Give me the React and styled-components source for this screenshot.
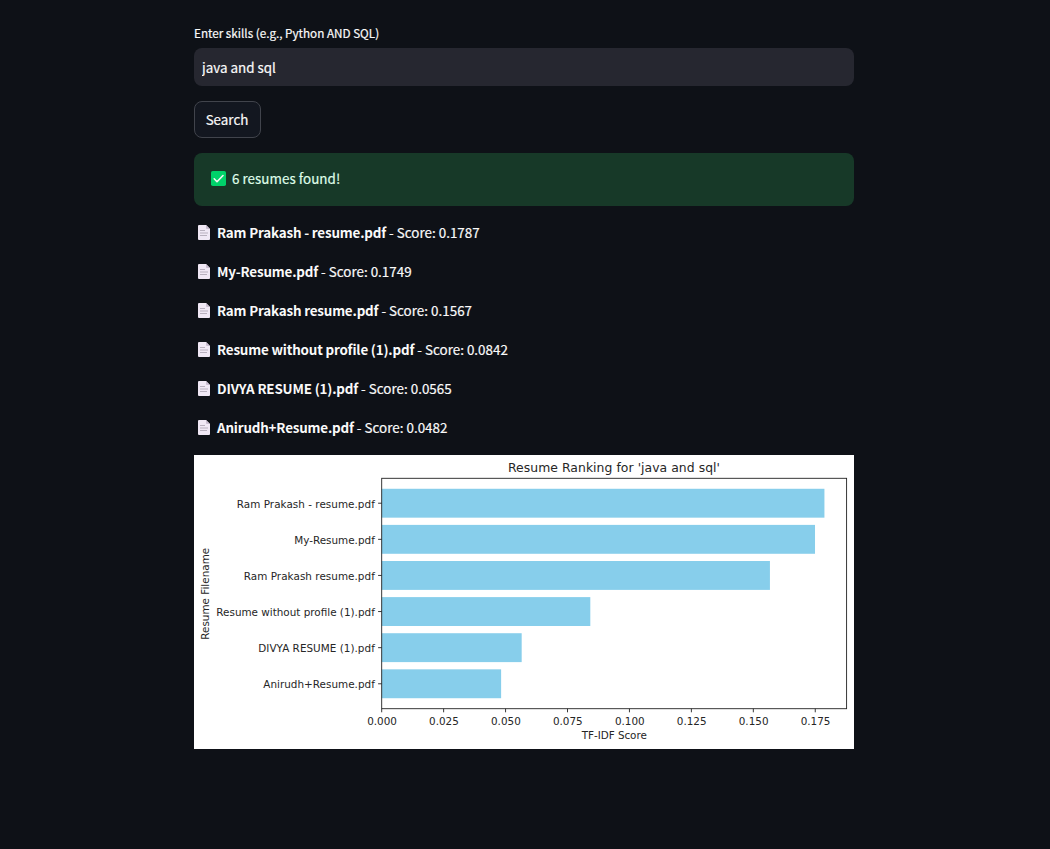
import React from 'react';
import styled, { createGlobalStyle } from 'styled-components';

const GlobalStyle = createGlobalStyle`
  * { box-sizing: border-box; }
  body {
    margin: 0;
    background: #0e1117;
    color: #fafafa;
    font-family: "Source Sans Pro", "Noto Sans CJK SC", sans-serif;
    font-size: 13.4px;
    -webkit-text-stroke: 0.2px currentColor;
  }
`;

const Page = styled.main`
  width: 660px;
  min-height: 849px;
  margin-left: 194px;
  padding-top: 22px;
  display: flex;
  flex-direction: column;
  align-items: flex-start;
`;

const Label = styled.label`
  font-size: 11.7px;
  line-height: 21px;
  height: 21px;
  margin-bottom: 5px;
`;

const Field = styled.input`
  width: 100%;
  height: 38px;
  padding: 0 8px 1px;
  border: 0;
  border-radius: 8px;
  outline: 0;
  background: #262730;
  color: #fafafa;
  font: inherit;
`;

const Button = styled.button`
  width: 67px;
  height: 37px;
  margin: 15px 0;
  padding: 0 1px 1px 0;
  border: 1px solid #41444c;
  border-radius: 8px;
  background: #131720;
  color: #fafafa;
  font: inherit;
`;

const Alert = styled.div`
  width: 100%;
  height: 53px;
  padding: 0 16px 2px 17px;
  display: flex;
  align-items: center;
  gap: 6px;
  border-radius: 8px;
  background: #173928;
  color: #dffde9;
  letter-spacing: 0.04px;
`;

const AlertText = styled.span`
  line-height: 24px;
  margin-bottom: 1px;
`;

const Results = styled.ul`
  list-style: none;
  margin: 14px 0 16px;
  padding: 0;
  display: flex;
  flex-direction: column;
  gap: 15px;
`;

const Result = styled.li`
  height: 24px;
  line-height: 24px;
  padding-left: 4px;
  display: flex;
  align-items: center;
  white-space: pre;
`;

const FileName = styled.strong`
  margin-left: 7px;
  font-weight: 700;
  letter-spacing: -0.17px;
  -webkit-text-stroke: 0;
`;

const Score = styled.span`
  letter-spacing: 0.02px;
`;

const ChartFigure = styled.svg`
  display: block;
  width: 660px;
  height: 294px;
  background: #fff;
  font-family: "DejaVu Sans", sans-serif;
  font-size: 10.4px;
  fill: #262626;
  -webkit-text-stroke: 0;
`;

const CheckIcon = () => (
  <svg width="15" height="15" viewBox="0 0 15 15">
    <rect width="15" height="15" rx="1.8" fill="#00d26a" />
    <path d="M3.2 7.8 6 10.7 12 4.5" fill="none" stroke="#f4f4f4" strokeWidth="1.6" strokeLinecap="round" strokeLinejoin="round" />
  </svg>
);

const PageIcon = () => (
  <svg width="12" height="15" viewBox="0 0 12 15">
    <path d="M1 0H8L12 4V14Q12 15 11 15H1Q0 15 0 14V1Q0 0 1 0Z" fill="#f0e8f5" />
    <path d="M8 0 12 4H9Q8 4 8 3Z" fill="#c9bdd0" />
    <path d="M2 5.5H7M2 8H10M2 10.5H9" stroke="#b8b0be" strokeWidth="1" />
  </svg>
);

const resumes = [
  { name: 'Ram Prakash - resume.pdf', score: 0.1787, labelWidth: 138 },
  { name: 'My-Resume.pdf', score: 0.1749, labelWidth: 80.5 },
  { name: 'Ram Prakash resume.pdf', score: 0.1567, labelWidth: 131 },
  { name: 'Resume without profile (1).pdf', score: 0.0842, labelWidth: 158.5 },
  { name: 'DIVYA RESUME (1).pdf', score: 0.0565, labelWidth: 116.5 },
  { name: 'Anirudh+Resume.pdf', score: 0.0482, labelWidth: 111.5 },
];

const plot = { left: 187.7, right: 652.6, top: 23.3, bottom: 253.7 };
const unit = 2477.5;
const pitch = (plot.bottom - plot.top) / 6.38;
const ticks = [0, 0.025, 0.05, 0.075, 0.1, 0.125, 0.15, 0.175];

const RankingChart = () => (
  <ChartFigure viewBox="0 0 660 294">
    <text x="420" y="17" textAnchor="middle" fontSize="12.4" textLength="212">Resume Ranking for 'java and sql'</text>
    {resumes.map((r, i) => {
      const mid = plot.top + pitch * (0.69 + i);
      return (
        <g key={r.name}>
          <rect x={plot.left} y={mid - pitch * 0.4} width={r.score * unit} height={pitch * 0.8} fill="#87ceeb" />
          <path d={`M${plot.left - 3.6} ${mid}H${plot.left}`} stroke="#222" strokeWidth="0.9" />
          <text x="180.8" y={mid + 4.5} textAnchor="end" textLength={r.labelWidth}>{r.name}</text>
        </g>
      );
    })}
    {ticks.map((t) => {
      const x = plot.left + t * unit;
      return (
        <g key={t}>
          <path d={`M${x} ${plot.bottom}v3.6`} stroke="#222" strokeWidth="0.9" />
          <text x={x + 0.3} y="269.5" textAnchor="middle">{t.toFixed(3)}</text>
        </g>
      );
    })}
    <rect x={plot.left} y={plot.top} width={plot.right - plot.left} height={plot.bottom - plot.top} fill="none" stroke="#222" strokeWidth="0.9" />
    <text x="420.3" y="284" textAnchor="middle" textLength="65">TF-IDF Score</text>
    <text transform="translate(15.3 138.8) rotate(-90)" textAnchor="middle" textLength="92">Resume Filename</text>
  </ChartFigure>
);

export default function App() {
  return (
    <>
      <GlobalStyle />
      <Page>
        <Label htmlFor="skills">Enter skills (e.g., Python AND SQL)</Label>
        <Field id="skills" defaultValue="java and sql" />
        <Button>Search</Button>
        <Alert>
          <CheckIcon />
          <AlertText>6 resumes found!</AlertText>
        </Alert>
        <Results>
          {resumes.map((r) => (
            <Result key={r.name}>
              <PageIcon />
              <FileName>{r.name}</FileName>
              <Score>{` - Score: ${r.score.toFixed(4)}`}</Score>
            </Result>
          ))}
        </Results>
        <RankingChart />
      </Page>
    </>
  );
}
